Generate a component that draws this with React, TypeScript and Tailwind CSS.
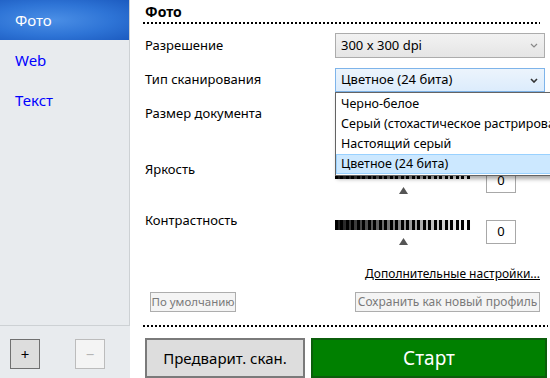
import React from "react";

const font = "font-['Noto_Sans','Open_Sans',sans-serif]";

function Chevron({ dark }: { dark?: boolean }) {
    return (
        <svg width="8" height="5" viewBox="0 0 8 5" className="shrink-0">
            <path
                d="M1 1 L4 4 L7 1"
                fill="none"
                stroke={dark ? "#333" : "#888"}
                strokeWidth={dark ? 1.6 : 1.2}
            />
        </svg>
    );
}

function Dots({ className }: { className?: string }) {
    return (
        <div
            className={`h-[2px] bg-[linear-gradient(to_right,#000_50%,transparent_50%)] bg-[length:4px_2px] ${className ?? ""}`}
        ></div>
    );
}

function SliderRow({ label, className }: { label: string; className?: string }) {
    return (
        <div className={`flex items-start ${className ?? ""}`}>
            <div className="w-[192px] pl-[2px] h-[18px] leading-[18px] text-[13px]">{label}</div>
            <div className="mt-[9px] w-[136px] flex flex-col items-center">
                <div className="w-full h-[10px] bg-[repeating-linear-gradient(to_right,#000_0px,#000_3px,transparent_3px,transparent_5.5px),linear-gradient(to_right,#1a1a1a,#ffffff)]"></div>
                <svg width="9" height="7" viewBox="0 0 9 7" className="mt-[8px]">
                    <polygon points="4.5,0 9,7 0,7" fill="#555" />
                </svg>
            </div>
            <div className="mt-[9px] ml-[15px] w-[30px] h-[24px] border border-[#a8a8a8] bg-white flex items-center justify-center text-[13px]">
                0
            </div>
        </div>
    );
}

export default function App() {
    return (
        <div className={`w-[550px] h-[378px] overflow-hidden flex bg-white text-black ${font}`}>
            {/* sidebar */}
            <div className="w-[130px] flex flex-col bg-[#e8ebee]">
                <div className="flex-1 border-r border-b border-[#cdd1d4]">
                    <div className="h-10 flex items-center pl-[15px] text-[15px] text-white bg-[radial-gradient(ellipse_at_40%_50%,#4b8fe6_0%,#2e74d6_55%,#1c5bc0_100%)]">
                        Фото
                    </div>
                    <div className="h-10 flex items-center pl-[15px] text-[15px] text-[#0000ff]">Web</div>
                    <div className="h-10 flex items-center pl-[15px] text-[15px] text-[#0000ff]">Текст</div>
                </div>
                <div className="h-[52px] flex items-start pt-[13px] pl-[10px] gap-[35px]">
                    <div className="w-[30px] h-[30px] border border-[#707070] bg-[#dddddd] flex items-center justify-center text-[15px] leading-none">
                        +
                    </div>
                    <div className="w-[30px] h-[30px] border border-[#bcbcbc] bg-[#f4f4f4] flex items-center justify-center text-[15px] leading-none text-[#b5b5b5]">
                        −
                    </div>
                </div>
            </div>

            {/* main */}
            <div className="flex-1 relative flex flex-col pl-[13px]">
                <div className="pt-[2px] pl-[2px] h-[22px] text-[14px] font-bold leading-[20px]">Фото</div>
                <Dots className="mr-[10px]" />

                <div className="mt-[9px] flex items-center h-[25px]">
                    <div className="w-[192px] pl-[2px] text-[13px]">Разрешение</div>
                    <div className="w-[210px] h-[25px] border border-[#acacac] bg-[linear-gradient(#f2f2f2,#e5e5e5)] flex items-center justify-between pl-[5px] pr-[6px] text-[13px]">
                        <span>300 x 300 dpi</span>
                        <Chevron />
                    </div>
                </div>

                <div className="mt-[10px] flex items-center h-[24px]">
                    <div className="w-[192px] pl-[2px] text-[13px]">Тип сканирования</div>
                    <div className="w-[210px] h-[24px] border border-[#7eb4ea] bg-[linear-gradient(#ecf4fc,#dcecfc)] flex items-center justify-between pl-[5px] pr-[6px] text-[13px]">
                        <span>Цветное (24 бита)</span>
                        <Chevron dark />
                    </div>
                </div>

                <div className="mt-[10px] flex items-center h-[24px]">
                    <div className="w-[192px] pl-[2px] text-[13px]">Размер документа</div>
                </div>

                <SliderRow label="Яркость" className="mt-[34px]" />
                <SliderRow label="Контрастность" className="mt-[17px]" />

                <div className="mt-[21px] h-[16px] flex justify-end pr-[10px]">
                    <span className="text-[12px] leading-[16px] underline">Дополнительные настройки...</span>
                </div>

                <div className="mt-[10px] flex justify-between pl-[7px] pr-[10px]">
                    <div className="w-[86px] h-[20px] border border-[#adadad] bg-[#f4f4f4] text-[#7a7a7a] text-[11.5px] whitespace-nowrap flex items-center justify-center">
                        По умолчанию
                    </div>
                    <div className="w-[185px] h-[20px] border border-[#adadad] bg-[#f4f4f4] text-[#7a7a7a] text-[12px] whitespace-nowrap flex items-center justify-center">
                        Сохранить как новый профиль
                    </div>
                </div>

                <Dots className="mt-[13px] mr-[2px]" />

                <div className="mt-[11px] flex gap-[6px] pl-[2px] pr-[3px]">
                    <div className="w-[160px] h-[40px] border-2 border-[#7a7a7a] bg-[#dddddd] flex items-center justify-center text-[15px]">
                        Предварит. скан.
                    </div>
                    <div className="flex-1 h-[40px] border-2 border-[#0b5e0b] bg-[#008000] text-white flex items-center justify-center text-[19px]">
                        Старт
                    </div>
                </div>

                {/* open dropdown list */}
                <div className="absolute left-[205px] top-[92px] w-[230px] border border-[#646464] bg-white shadow-[2px_3px_4px_rgba(0,0,0,0.35)] py-[1px] text-[12.5px]">
                    <div className="h-[20px] leading-[20px] pl-[5px] whitespace-nowrap">Черно-белое</div>
                    <div className="h-[20px] leading-[20px] pl-[5px] whitespace-nowrap">Серый (стохастическое растрирование)</div>
                    <div className="h-[20px] leading-[20px] pl-[5px] whitespace-nowrap">Настоящий серый</div>
                    <div className="h-[20px] leading-[18px] pl-[4px] whitespace-nowrap bg-[#cce8ff] border border-[#99d1ff]">
                        Цветное (24 бита)
                    </div>
                </div>
            </div>
        </div>
    );
}
